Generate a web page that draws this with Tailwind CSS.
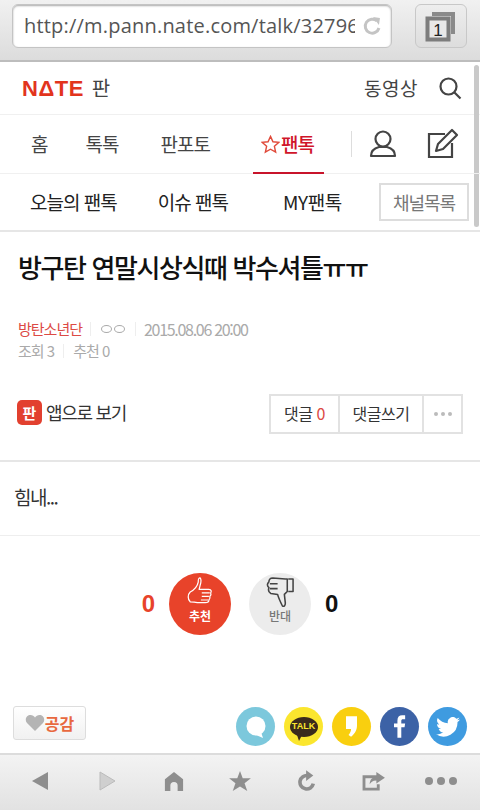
<!DOCTYPE html>
<html lang="ko">
  <head>
    <meta charset="UTF-8" />
    <meta name="viewport" content="width=device-width, initial-scale=1.0" />
    <script src="https://cdn.jsdelivr.net/npm/@tailwindcss/browser@4"></script>
  </head>
  <body class="bg-white font-['Noto_Sans_CJK_KR',sans-serif]">
    <div class="relative w-[480px] h-[810px] overflow-hidden flex flex-col bg-white">
      <!-- browser top bar -->
      <div class="h-[62px] shrink-0 flex items-start pt-1 pl-3 pr-[13px] justify-between bg-gradient-to-b from-[#f1f1f1] to-[#dcdcdc] border-b-2 border-[#bdbdbd]">
        <div class="w-[380px] h-[44px] bg-white rounded-md border border-[#c4c4c4] shadow-[inset_0_1px_2px_#aaa] flex items-center pl-[11px] pr-2 gap-2">
          <span class="w-[332px] overflow-hidden whitespace-nowrap font-['Open_Sans',sans-serif] text-[20px] tracking-[0.2px] text-[#555]">http://m.pann.nate.com/talk/32796</span>
          <svg width="20" height="20" viewBox="0 0 20 20" fill="none"><path d="M16 12a7 7 0 1 1-2-7" stroke="#c4c4c4" stroke-width="3"/><path d="M10 1l7 1-1 7z" fill="#c4c4c4"/></svg>
        </div>
        <div class="w-[52px] h-[44px] rounded-md border border-[#c8c8c8] bg-gradient-to-b from-[#eee] to-[#ddd] flex items-center justify-center">
          <svg width="32" height="32" viewBox="0 0 32 32">
            <path d="M7 2h23v22h-4V6H7z" fill="#8a8a8a" />
            <rect x="2.500" y="8.500" width="21" height="21" fill="#e8e8e8" stroke="#7d7d7d" stroke-width="4" />
            <text x="13" y="26" text-anchor="middle" font-size="17" fill="#222" font-family="Liberation Sans">1</text>
          </svg>
        </div>
      </div>

      <!-- scrollbar -->
      <div class="absolute right-[1px] top-[65px] w-[5px] h-[162px] rounded bg-[#c9c9c9]"></div>

      <!-- logo row -->
      <div class="h-[53px] shrink-0 flex items-center pl-[22px] pr-[18px] border-b border-[#f0f0f0]">
        <span class="font-['Liberation_Sans',sans-serif] font-bold text-[22px] text-[#e2341d] tracking-[0.5px]">NΔTE</span>
        <span class="ml-2 text-[20px] text-[#444]">판</span>
        <span class="ml-auto text-[19px] text-[#444] tracking-[0.5px]">동영상</span>
        <svg class="ml-[20px]" width="24" height="24" viewBox="0 0 24 24" fill="none" stroke="#444" stroke-width="2.200"><circle cx="10.500" cy="10.500" r="8"/><path d="M16 16l6.500 6.500"/></svg>
      </div>

      <!-- main nav -->
      <div class="relative h-[59px] shrink-0 flex items-center border-b border-[#f0f0f0] text-[19px] text-[#444] tracking-[-1px]">
        <span class="ml-[31px]">홈</span>
        <span class="ml-[38px]">톡톡</span>
        <span class="ml-[42px]">판포토</span>
        <span class="ml-[51px] flex items-center text-[#d0152a] font-medium">
          <svg class="mr-[1px]" width="19" height="19" viewBox="0 0 20 20" fill="none" stroke="#e04a3a" stroke-width="1.500"><path d="M10 1.500l2.600 5.600 6 .7-4.500 4.100 1.300 6.100L10 15l-5.400 3 1.300-6.100L1.400 7.800l6-.7z"/></svg>
          팬톡
        </span>
        <span class="ml-[37px] w-px h-[26px] bg-[#ddd]"></span>
        <svg class="ml-[17px]" width="28" height="30" viewBox="0 0 28 30" fill="none" stroke="#444" stroke-width="2.200"><circle cx="14" cy="10" r="7.500"/><path d="M2 27c0-5 4-8 8-9h8c4 1 8 4 8 9z" stroke-linejoin="round"/></svg>
        <svg class="ml-[30px]" width="32" height="32" viewBox="0 0 32 32" fill="none" stroke="#444" stroke-width="2.200"><path d="M18 6H2v23h23V15"/><path d="M9 23l2-7L25 2l5 5-14 14z" stroke-linejoin="round"/></svg>
        <span class="absolute left-[253px] bottom-[-1px] w-[71px] h-[2px] bg-[#c8142b]"></span>
      </div>

      <!-- sub nav -->
      <div class="h-[58px] shrink-0 flex items-center border-b-2 border-[#e6e6e6] text-[19px] text-[#222] tracking-[-1px]">
        <span class="ml-[30px]">오늘의 팬톡</span>
        <span class="ml-[41px]">이슈 팬톡</span>
        <span class="ml-[55px] tracking-[-0.4px]">MY팬톡</span>
        <span class="ml-auto mr-[11px] w-[90px] h-[38px] flex items-center justify-center border-2 border-[#ddd] text-[18px] text-[#777]">채널목록</span>
      </div>

      <!-- post title -->
      <h1 class="mt-[15px] ml-[18px] text-[26px] leading-[40px] font-medium text-[#111] tracking-[-1.400px]">방구탄 연말시상식때 박수셔틀ㅠㅠ</h1>

      <!-- meta -->
      <div class="mt-[31px] ml-[18px] text-[15px] leading-[22px] text-[#aaa] tracking-[-1px]">
        <div class="flex items-center">
          <span class="text-[#dc4a44]">방탄소년단</span>
          <span class="mx-[8px] w-px h-[14px] bg-[#eee]"></span>
          <span class="flex gap-[2px] mx-[2px]"><i class="w-[11px] h-[8px] rounded-[50%] border border-[#aaa]"></i><i class="w-[11px] h-[8px] rounded-[50%] border border-[#aaa]"></i></span>
          <span class="mx-[8px] w-px h-[14px] bg-[#eee]"></span>
          <span class="text-[16px] tracking-[-1.300px]">2015.08.06 20:00</span>
        </div>
        <div class="flex items-center">
          <span>조회 3</span>
          <span class="mx-[9px] w-px h-[14px] bg-[#eee]"></span>
          <span>추천 0</span>
        </div>
      </div>

      <!-- app link and comment buttons -->
      <div class="mt-[32px] ml-[17px] flex items-center">
        <span class="mb-[3px] w-[25px] h-[25px] rounded-[5px] bg-[#e2402f] flex items-center justify-center text-[15px] font-bold leading-none text-white">판</span>
        <span class="mb-[3px] ml-[4px] text-[18px] text-[#333] tracking-[-1.300px]">앱으로 보기</span>
        <div class="ml-auto mr-[17px] flex h-[40px] w-[194px] border-2 border-[#e2e2e2] text-[16px] text-[#333] tracking-[-0.5px]">
          <span class="w-[69px] pb-[3px] flex items-center justify-center gap-[4px] border-r-2 border-[#e2e2e2]">댓글 <span class="text-[#dc4a44]">0</span></span>
          <span class="w-[84px] pb-[3px] flex items-center justify-center border-r-2 border-[#e2e2e2]">댓글쓰기</span>
          <span class="flex-1 flex items-center justify-center gap-[3px]">
            <i class="w-[4px] h-[4px] rounded-full bg-[#bbb]"></i><i class="w-[4px] h-[4px] rounded-full bg-[#bbb]"></i><i class="w-[4px] h-[4px] rounded-full bg-[#bbb]"></i>
          </span>
        </div>
      </div>

      <!-- post body -->
      <div class="mt-[26px] h-[76px] shrink-0 pb-[2px] flex items-center border-t-2 border-b border-t-[#e6e6e6] border-b-[#eee] pl-[14px] text-[19px] text-[#333] tracking-[-1.500px]">힘내...</div>

      <!-- votes -->
      <div class="mt-[37px] flex items-center justify-center gap-[14px] font-['Liberation_Sans',sans-serif] text-[24px] font-bold">
        <span class="text-[#e8432a]">0</span>
        <div class="w-[62px] h-[62px] rounded-full bg-[#e8432a] flex flex-col items-center pt-[3px] text-white">
          <svg width="26" height="32" viewBox="0 0 28 36" fill="none" stroke="#fff" stroke-width="1.400" stroke-linejoin="round"><path d="M14 2c2 2 1 6 0 9l-1 4h11c3 0 3 3 2 4 1 2 0 3-1 4 1 2 0 3-1 4 0 3-2 3-4 3H11c-3-1-5-1-8-1-3-3-3-8 0-11 4-2 8-6 9-11 0-3 0-5 2-5z"/><path d="M16 19h9M16 23h8M15 27h8"/></svg>
          <span class="mt-[2px] text-[12px] leading-[12px] font-['Noto_Sans_CJK_KR',sans-serif]">추천</span>
        </div>
        <div class="ml-[4px] w-[62px] h-[62px] rounded-full bg-[#ececec] flex flex-col items-center pt-[3px] text-[#777]">
          <svg width="29" height="32" viewBox="0 0 30 33" fill="none" stroke="#444" stroke-width="1.600" stroke-linejoin="round"><path d="M20 3L7 2C4 2 3 4 3 6c-2 2-2 4 0 6-1 3 0 5 2 6l7 1c1 4 3 8 5 12 2 1 3-1 3-3l-1-9 3-3V3z"/><path d="M4 8h8M4 13h8M23 3h5v13h-5"/></svg>
          <span class="mt-[2px] text-[12px] leading-[12px] font-medium font-['Noto_Sans_CJK_KR',sans-serif]">반대</span>
        </div>
        <span class="text-[#111]">0</span>
      </div>

      <!-- empathy and share -->
      <div class="mt-auto h-[54px] shrink-0 flex items-start pt-[7px] pl-[13px] pr-[13px]">
        <div class="w-[73px] h-[34px] rounded-[3px] border border-[#ddd] bg-gradient-to-b from-white to-[#f1f1f1] flex items-center justify-center text-[16px] font-bold text-[#e8683f]">
          <svg width="20" height="18" viewBox="0 0 20 18"><path d="M10 17L2 9C-1 5 2 1 5.500 1 7.500 1 9 2 10 3.500 11 2 12.500 1 14.500 1 18 1 21 5 18 9z" fill="#b4b4b4"/></svg>
          공감
        </div>
        <div class="ml-auto mt-[1px] flex gap-[9px]">
          <div class="w-[39px] h-[39px] rounded-full bg-[#7cc8dc] flex items-center justify-center">
            <svg width="24" height="24" viewBox="0 0 24 24"><circle cx="12" cy="11" r="9.500" fill="#fff"/><path d="M12 20l7 3-2-6z" fill="#fff"/></svg>
          </div>
          <div class="w-[39px] h-[39px] rounded-full bg-[#fbe62e] flex items-center justify-center">
            <div class="relative w-[28px] h-[20px] rounded-[50%] bg-[#3a2a1c] flex items-center justify-center font-['Liberation_Sans',sans-serif] text-[9px] font-bold text-[#fbe62e]">TALK<i class="absolute left-[7px] bottom-[-4px] w-0 h-0 border-l-[2px] border-r-[3px] border-t-[6px] border-l-transparent border-r-transparent border-t-[#3a2a1c]"></i></div>
          </div>
          <div class="w-[39px] h-[39px] rounded-full bg-[#f9cf0f] flex items-center justify-center">
            <svg width="11" height="21" viewBox="0 0 13 24"><path d="M0 0h13v11c0 5-3 10-7 13l-3-2c2-2 3-5 3-7H0z" fill="#fff"/></svg>
          </div>
          <div class="w-[39px] h-[39px] rounded-full bg-[#3c62a6] flex items-center justify-center">
            <svg width="12" height="23" viewBox="0 0 14 26"><path d="M4 26V14H0V9.500h4V6c0-4 2-6 5.500-6H13v4.500h-2.500C9 4.500 8.500 5 8.500 6.500v3H13l-.7 4.500H8.500v12z" fill="#fff"/></svg>
          </div>
          <div class="w-[39px] h-[39px] rounded-full bg-[#3f9be0] flex items-center justify-center">
            <svg width="24" height="20" viewBox="0 0 24 20"><path d="M24 2.400c-.9.400-1.800.7-2.800.8 1-.6 1.800-1.500 2.200-2.700-1 .6-2 1-3.100 1.200A4.900 4.900 0 0 0 11.900 6.200C7.800 6 4.200 4 1.700.9c-1.300 2.300-.6 5.100 1.500 6.600-.8 0-1.600-.2-2.200-.6 0 2.400 1.700 4.400 3.900 4.900-.7.200-1.500.2-2.200.1.600 2 2.400 3.400 4.600 3.400A9.900 9.900 0 0 1 0 17.300 14 14 0 0 0 21.500 5c1-.7 1.800-1.600 2.500-2.600z" fill="#fff"/></svg>
          </div>
        </div>
      </div>

      <!-- browser bottom bar -->
      <div class="h-[57px] shrink-0 grid grid-cols-7 items-center justify-items-center pl-[7px] pr-[6px] pb-[3px] bg-gradient-to-b from-[#f3f3f3] to-[#e2e2e2] border-t-2 border-[#dcdcdc]">
        <svg width="16" height="20" viewBox="0 0 16 20"><path d="M16 1v18L0 10z" fill="#8e8e8e"/></svg>
        <svg width="16" height="20" viewBox="0 0 16 20"><path d="M1 1v18l15-9z" fill="#cfcfcf" stroke="#bbb"/></svg>
        <svg width="20" height="20" viewBox="0 0 22 22"><path d="M11 1l10 8v13h-6v-6a4 4 0 0 0-8 0v6H1V9z" fill="#8e8e8e"/></svg>
        <svg width="22" height="20" viewBox="0 0 24 22"><path d="M12 0l3 8h9l-7 5.500 3 8.500-8-5-8 5 3-8.500L0 8h9z" fill="#8e8e8e"/></svg>
        <svg width="18" height="22" viewBox="0 0 20 24" fill="none"><path d="M17 15a7.500 7.500 0 1 1-6-9" stroke="#8e8e8e" stroke-width="4"/><path d="M9 0l8 6-8 6z" fill="#8e8e8e"/></svg>
        <svg width="23" height="19" viewBox="0 0 24 20" fill="none"><path d="M16 5H2v13h15v-5" stroke="#8e8e8e" stroke-width="3"/><path d="M15 0l9 6-9 6V9c-4 0-6 2-7 4 0-5 3-8 7-8z" fill="#8e8e8e"/></svg>
        <div class="flex gap-[4px]">
          <i class="w-[8px] h-[8px] rounded-full bg-[#8e8e8e]"></i><i class="w-[8px] h-[8px] rounded-full bg-[#8e8e8e]"></i><i class="w-[8px] h-[8px] rounded-full bg-[#8e8e8e]"></i>
        </div>
      </div>
    </div>
  </body>
</html>
